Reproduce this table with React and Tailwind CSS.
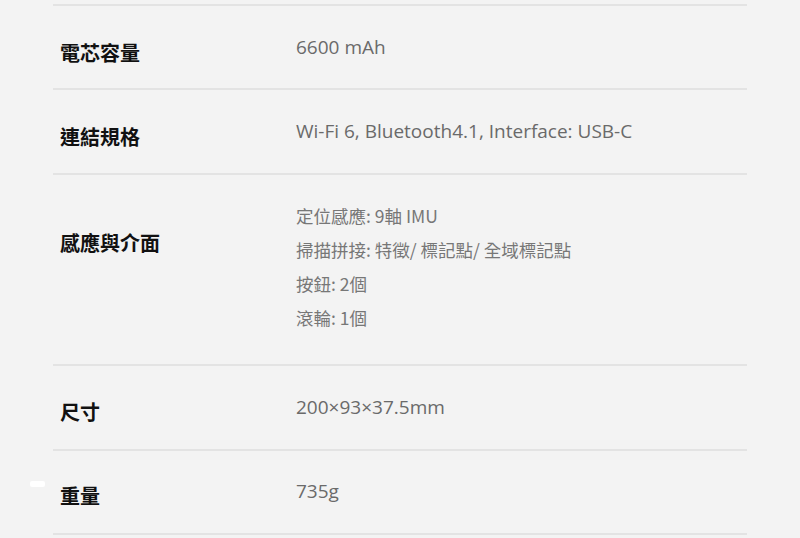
export default function App() {
  const label = "font-['Noto_Sans_CJK_TC','Noto_Sans_CJK_SC',sans-serif] font-bold text-[20px] leading-[28px] text-[#111]";
  const val = "font-['Open_Sans','Noto_Sans_CJK_TC',sans-serif] text-[19px] leading-[26px] text-[#6a6a6a]";
  const cjk = "font-['Noto_Sans_CJK_TC','Noto_Sans_CJK_SC',sans-serif] text-[17.5px] leading-[34px] text-[#777]";
  const rows = [
    { l: "電芯容量", v: "6600 mAh", h: "h-[84px]" },
    { l: "連結規格", v: "Wi-Fi 6, Bluetooth4.1, Interface: USB-C", h: "h-[85px]" },
  ];
  return (
    <div className="relative w-[800px] h-[538px] bg-[#f3f3f3] overflow-hidden">
      <div className="ml-[53px] mt-[4px] w-[694px] flex flex-col">
        {rows.map((r) => (
          <div key={r.l} className={`flex border-t-2 border-[#e3e3e3] ${r.h}`}>
            <div className={`w-[243px] pl-[7px] pt-[33px] ${label}`}>{r.l}</div>
            <div className={`pt-[28px] ${val}`}>{r.v}</div>
          </div>
        ))}
        <div className="flex border-t-2 border-[#e3e3e3] h-[191px]">
          <div className={`w-[243px] pl-[7px] pt-[54px] ${label}`}>感應與介面</div>
          <div className={`pt-[24px] ${cjk}`}>
            <p>定位感應: 9軸 IMU</p>
            <p>掃描拼接: 特徵/ 標記點/ 全域標記點</p>
            <p>按鈕: 2個</p>
            <p>滾輪: 1個</p>
          </div>
        </div>
        <div className="flex border-t-2 border-[#e3e3e3] h-[85px]">
          <div className={`w-[243px] pl-[7px] pt-[32px] ${label}`}>尺寸</div>
          <div className={`pt-[28px] ${val}`}>200×93×37.5mm</div>
        </div>
        <div className="flex border-t-2 border-b-2 border-[#e3e3e3] h-[86px]">
          <div className={`w-[243px] pl-[7px] pt-[31px] ${label}`}>重量</div>
          <div className={`pt-[27px] ${val}`}>735g</div>
        </div>
      </div>
      <div className="absolute left-[30px] top-[481px] w-[15px] h-[6px] rounded-[2px] bg-white" />
    </div>
  );
}
